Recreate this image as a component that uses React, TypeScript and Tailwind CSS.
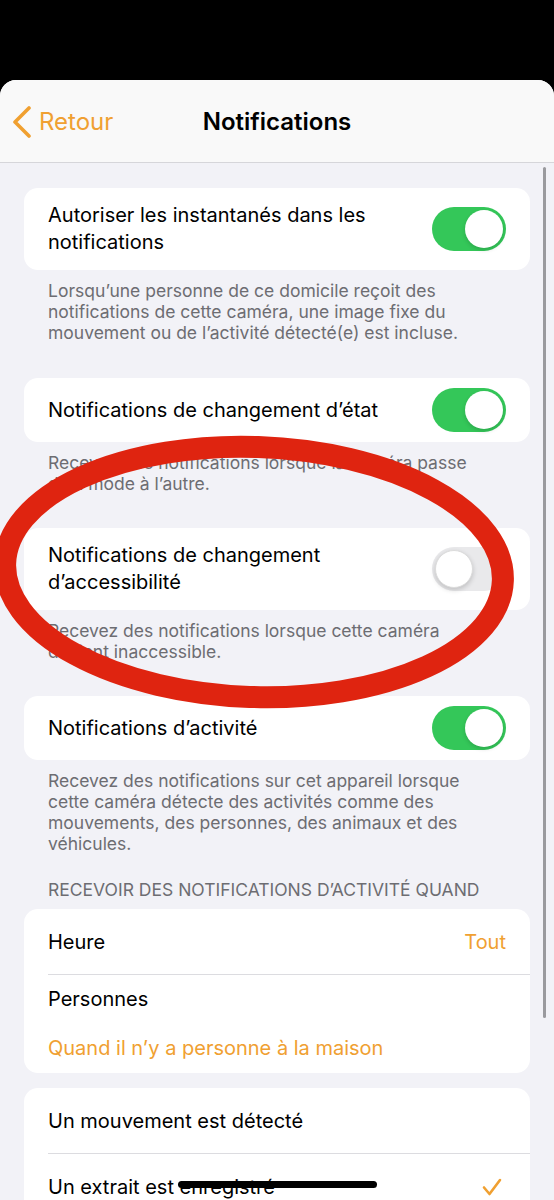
import React from "react"

const font = { fontFamily: "Inter, 'Noto Sans', 'Liberation Sans', sans-serif" }

function Toggle({ on }: { on: boolean }) {
  if (on) {
    return (
      <div className="flex h-[44px] w-[74px] shrink-0 items-center justify-end rounded-full bg-[#34c759] p-[3px]">
        <div className="h-[38px] w-[38px] rounded-full bg-white shadow-[0_2px_4px_rgba(0,0,0,0.15)]" />
      </div>
    )
  }
  return (
    <div className="flex h-[44px] w-[74px] shrink-0 items-center justify-start rounded-full bg-[#e9e9eb] p-[3px]">
      <div className="h-[38px] w-[38px] rounded-full border border-[#dcdcdc] bg-white shadow-[0_2px_5px_rgba(0,0,0,0.18)]" />
    </div>
  )
}

function ToggleCard({ lines, on }: { lines: string[]; on: boolean }) {
  const tall = lines.length > 1
  return (
    <div
      className={
        tall
          ? "flex items-center justify-between rounded-[14px] bg-white px-6 py-[14px]"
          : "flex h-[64px] items-center justify-between rounded-[14px] bg-white px-6"
      }
    >
      <div className="text-[20px] leading-[27px] text-black">
        {lines.map((l, i) => (
          <div key={i}>{l}</div>
        ))}
      </div>
      <Toggle on={on} />
    </div>
  )
}

function Footer({ lines }: { lines: string[] }) {
  return (
    <div className="px-12 pt-[10px] text-[17.5px] leading-[21px] text-[#6d6d72]">
      {lines.map((l, i) => (
        <div key={i}>{l}</div>
      ))}
    </div>
  )
}

export default function App() {
  return (
    <div className="relative h-[1200px] w-[554px] overflow-hidden bg-black" style={font}>
      <div className="mt-[80px] overflow-hidden rounded-t-[16px] bg-[#f2f2f7]">
        {/* Nav bar */}
        <div className="relative flex h-[83px] items-center border-b border-[#d6d6da] bg-[#f9f9f9] pt-[2px]">
          <div className="flex items-center gap-[7px] pl-[12px] text-[#f0a031]">
            <svg width="20" height="32" viewBox="0 0 20 32" fill="none">
              <path d="M17 2 L3 16 L17 30" stroke="#f0a031" strokeWidth="3.6" strokeLinecap="round" strokeLinejoin="round" />
            </svg>
            <span className="text-[24px]">Retour</span>
          </div>
          <div className="absolute inset-x-0 text-center text-[24px] font-semibold text-black">Notifications</div>
        </div>

        <div className="px-6 pt-[25px]">
          <ToggleCard lines={["Autoriser les instantanés dans les", "notifications"]} on />
        </div>
        <Footer
          lines={[
            "Lorsqu’une personne de ce domicile reçoit des",
            "notifications de cette caméra, une image fixe du",
            "mouvement ou de l’activité détecté(e) est incluse.",
          ]}
        />

        <div className="px-6 pt-[35px]">
          <ToggleCard lines={["Notifications de changement d’état"]} on />
        </div>
        <Footer lines={["Recevez des notifications lorsque la caméra passe", "d’un mode à l’autre."]} />

        <div className="px-6 pt-[34px]">
          <ToggleCard lines={["Notifications de changement", "d’accessibilité"]} on={false} />
        </div>
        <Footer lines={["Recevez des notifications lorsque cette caméra", "devient inaccessible."]} />

        <div className="px-6 pt-[34px]">
          <ToggleCard lines={["Notifications d’activité"]} on />
        </div>
        <Footer
          lines={[
            "Recevez des notifications sur cet appareil lorsque",
            "cette caméra détecte des activités comme des",
            "mouvements, des personnes, des animaux et des",
            "véhicules.",
          ]}
        />

        <div className="px-12 pt-[25px] pb-[9px] text-[17.5px] leading-[21px] text-[#6d6d72]">
          RECEVOIR DES NOTIFICATIONS D’ACTIVITÉ QUAND
        </div>

        <div className="px-6">
          <div className="rounded-[14px] bg-white">
            <div className="flex h-[65px] items-center justify-between px-6 text-[20px]">
              <span className="text-black">Heure</span>
              <span className="text-[#f0a031]">Tout</span>
            </div>
            <div className="ml-6 h-px bg-[#dcdce0]" />
            <div className="flex flex-col gap-[22px] px-6 pt-[11px] pb-[11px] text-[20px] leading-[27px]">
              <span className="text-black">Personnes</span>
              <span className="text-[#f0a031]">Quand il n’y a personne à la maison</span>
            </div>
          </div>
        </div>

        <div className="px-6 pt-[15px]">
          <div className="rounded-[14px] bg-white">
            <div className="flex h-[65px] items-center px-6 text-[20px] text-black">Un mouvement est détecté</div>
            <div className="ml-6 h-px bg-[#dcdce0]" />
            <div className="flex h-[65px] items-center justify-between px-6 text-[20px] text-black">
              <span>Un extrait est enregistré</span>
              <svg width="20" height="18" viewBox="0 0 20 18" fill="none" className="mr-[4px]">
                <path d="M2 9.5 L7.5 16 L18 2" stroke="#f0a031" strokeWidth="2.6" strokeLinecap="round" strokeLinejoin="round" />
              </svg>
            </div>
          </div>
        </div>
      </div>

      {/* scroll indicator */}
      <div className="absolute left-[543px] top-[167px] h-[851px] w-[3px] rounded-full bg-[#9a9a9e]" />

      {/* red annotation ellipse */}
      <svg className="pointer-events-none absolute left-0 top-0" width="554" height="1200" viewBox="0 0 554 1200">
        <ellipse cx="254" cy="572" rx="249" ry="125" fill="none" stroke="#df2410" strokeWidth="22" transform="rotate(2 254 572)" />
      </svg>

      {/* home indicator */}
      <div className="absolute left-[178px] top-[1181px] h-[7px] w-[199px] rounded-full bg-black" />
    </div>
  )
}
